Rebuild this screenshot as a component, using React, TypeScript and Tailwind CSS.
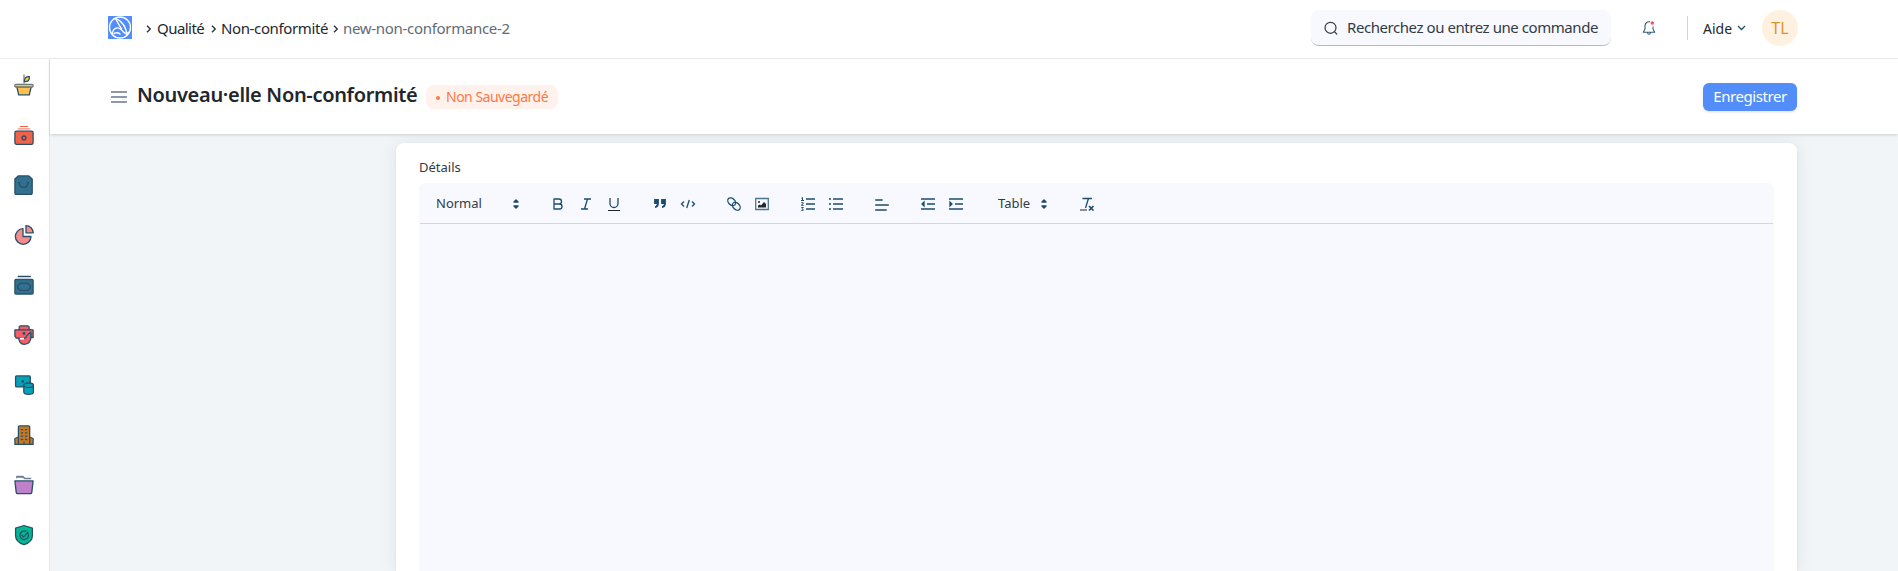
import React from 'react';

interface IconProps {
  children: React.ReactNode;
}

const SideIcon: React.FC<IconProps> = ({ children }) => (
  <a href="#" className="flex h-[50px] w-full items-center justify-center pr-px">
    <svg width="22" height="22" viewBox="0 0 22 22" fill="none" stroke="#285069" strokeWidth="1.3" strokeLinejoin="round" strokeLinecap="round">
      {children}
    </svg>
  </a>
);

const Sidebar = () => (
  <nav className="w-[50px] shrink-0 border-r border-[#e2e6ea] bg-white pt-px">
    <SideIcon>
      <path d="M11 9V1" stroke="#6b8799" />
      <path d="M11.500 7.600c-.5-3 1.200-5.400 4.900-5 .4 3.200-1.400 5.400-4.900 5z" fill="#ffc250" />
      <path d="M3.800 12.500h14.400l-1.900 8.300H5.700z" fill="#ffc250" />
      <rect x="1.900" y="10.400" width="18.200" height="2.600" rx="1" fill="#ffc250" stroke="#6b7a72" />
    </SideIcon>
    <SideIcon>
      <path d="M7.300 2.500h7.400" stroke="#f0634a" strokeWidth="1" />
      <path d="M5.500 4.900h11" stroke="#f7a99c" strokeWidth="1.600" />
      <rect x="1.900" y="7.200" width="18.200" height="13.100" rx="1.600" fill="#f0634a" />
      <circle cx="11" cy="13.900" r="1.900" />
    </SideIcon>
    <SideIcon>
      <path d="M5.200 1.900h10.600l3.400 3v14.200a1.200 1.200 0 0 1-1.200 1.200H3.100a1.200 1.200 0 0 1-1.200-1.200V4.900z" fill="#32708f" />
      <path d="M6.200 8.700c.2 6.200 8.400 6.200 8.700 0M5.700 8.700h1M14.400 8.700h1" />
    </SideIcon>
    <SideIcon>
      <path d="M10 4.700a7.800 7.800 0 1 0 8 7.800h-8z" fill="#f58c8c" />
      <path d="M13 1.700v7.100h7.200A7.200 7.200 0 0 0 13 1.700z" fill="#f58c8c" />
    </SideIcon>
    <SideIcon>
      <path d="M5.200 2.500h12.100" />
      <rect x="1.900" y="5.500" width="18.200" height="14.500" rx="1" fill="#32708f" />
      <path d="M7.500 9.200h7c1 0 1.200 1.700 2.800 2.200v2.800c-1.600.5-1.800 2.200-2.800 2.200h-7c-1 0-1.200-1.700-2.800-2.200v-2.800c1.600-.5 1.800-2.200 2.800-2.200z" />
    </SideIcon>
    <SideIcon>
      <path d="M5.500 13c.3 4.500 2 7.300 5.700 7.300 4.200 0 6.600-2.800 6.800-7.500V6H5.500z" fill="#f55d68" />
      <path d="M6.200 5.700V3.500a1.700 1.700 0 0 1 1.700-1.700h6.500a1.700 1.700 0 0 1 1.700 1.700v2.200" fill="#f55d68" />
      <path d="M1.900 5.800h18.200v7.700h-2.200V8.200l-3.200 2.300-2.300 3.700H3.300l-1.400-2z" fill="#f55d68" />
      <circle cx="11" cy="9.500" r=".8" />
      <path d="M7.700 14.700h2.500" stroke="#fff" strokeWidth="1.800" />
    </SideIcon>
    <SideIcon>
      <rect x="2.600" y="1.900" width="14.700" height="11" rx="1" fill="#00a4b8" />
      <circle cx="9.700" cy="7.400" r=".7" />
      <path d="M10.800 11.200v6.900c0 1.300 2.100 2.200 4.800 2.200s4.800-.9 4.800-2.200v-6.900" fill="#00a4b8" />
      <ellipse cx="15.600" cy="11.200" rx="4.800" ry="2.200" fill="#00a4b8" />
    </SideIcon>
    <SideIcon>
      <path d="M1.900 14.500l3.600-1.500h11l3.600 1.500v5.900H1.900z" fill="#c87a20" />
      <path d="M5.400 20.400V3.200a1.400 1.400 0 0 1 1.400-1.400h8.500a1.400 1.400 0 0 1 1.400 1.400v17.200z" fill="#c87a20" />
      <path d="M8.300 5.600h1.400M12.400 5.600h1.400M8.300 8.900h1.400M12.400 8.900h1.400M8.300 12.200h1.400M12.400 12.200h1.400M8.300 15.500h1.400M12.400 15.500h1.400M11 18.200v2" />
    </SideIcon>
    <SideIcon>
      <path d="M3.800 3.800V2.500h6.200l1.700 2h6" fill="#be81cc" stroke="#6b7f92" />
      <path d="M1.900 6.900h18.200l-1.300 11.500a1.500 1.500 0 0 1-1.500 1.300H4.700a1.500 1.500 0 0 1-1.500-1.300z" fill="#be81cc" />
    </SideIcon>
    <SideIcon>
      <path d="M11 1.500l8.400 2.700v7.300c0 4.600-3.600 7.700-8.400 9.200-4.800-1.500-8.400-4.600-8.400-9.200V4.200z" fill="#00b894" />
      <path d="M15 9.200a4.300 4.300 0 1 1-2.300-2M8.800 11.200l1.900 1.700 4.300-5" />
    </SideIcon>
  </nav>
);

const Chevron = () => (
  <svg width="6" height="10" viewBox="0 0 6 10" fill="none" stroke="#1f272e" strokeWidth="1.200" className="mt-0.5 shrink-0">
    <path d="M1 1.800L4.300 5 1 8.200" />
  </svg>
);

const Navbar = () => (
  <header className="flex h-[59px] items-center border-b border-[#ebeef5] bg-white pb-0.5 pl-[108px] pr-[100px]">
    <svg width="24" height="23" viewBox="0 0 24 23" fill="none" stroke="#fff" strokeWidth="1.300" className="-mt-0.5 shrink-0">
      <path d="M0 0h24v23H0z" fill="#528dfa" stroke="none" />
      <circle cx="12" cy="11.500" r="10.500" />
      <path d="M4.300 18.800c-.2-4 2-7 5.200-7 3 0 5 3 6 4.300 1.500 1.800 4 1.500 6.200-.3" />
      <path d="M7.500 2.500C13.500 4.500 18.500 11 18.800 19M7.500 2.500C9.500 6 10.500 8.500 14 13.500M5.500 18.200c1.500-2 5.500-2 7 .3" />
    </svg>
    <nav className="flex items-center whitespace-nowrap text-[15px] text-[#1f272e]">
      <span className="ml-[14px]"><Chevron /></span>
      <a href="#" className="ml-[5px] w-[54px] tracking-[-0.55px]">Qualité</a>
      <Chevron />
      <a href="#" className="ml-1 w-[109px] tracking-[-0.38px]">Non-conformité</a>
      <span className="ml-[3px]"><Chevron /></span>
      <span className="ml-1 tracking-[-0.31px] text-[#5f6c76]">new-non-conformance-2</span>
    </nav>
    <div className="ml-auto flex h-9 w-[300px] items-center rounded-lg border-b border-[#b4bac2] bg-[#f7f9ff] pl-[13px] text-[15px] text-[#313b44]">
      <svg width="14" height="14" viewBox="0 0 14 14" fill="none" stroke="#313b44" strokeWidth="1.200" strokeLinecap="round" className="mr-[9px] shrink-0">
        <circle cx="6.500" cy="6.800" r="5.500" />
        <path d="M10.400 10.700l2.300 2.300" />
      </svg>
      <span className="whitespace-nowrap tracking-[-0.44px]">Recherchez ou entrez une commande</span>
    </div>
    <svg width="14" height="16" viewBox="0 0 14 16" fill="none" stroke="#315d7c" strokeWidth="1.100" strokeLinejoin="round" className="ml-[31px]">
      <path d="M8 1.900C5 1.300 3 3.300 3 6v3L1.300 12.300h11.400L11 9V6.500M5.500 12.500c.2 2.300 2.800 2.300 3 0" />
      <circle cx="10.300" cy="3" r="1.700" fill="#ff4d4d" stroke="none" />
    </svg>
    <div className="ml-[31px] h-6 w-px bg-[#d1d6db]" />
    <button className="ml-[15px] flex w-[43px] items-center justify-between text-[14px] text-[#1f272e]">
      Aide
      <svg width="9" height="6" viewBox="0 0 9 6" fill="none" stroke="#1f4d6d" strokeWidth="1.300">
        <path d="M1 1l3.500 3.500L8 1" />
      </svg>
    </button>
    <div className="ml-4 flex size-9 items-center justify-center rounded-full bg-[#fff1df] text-[16px] text-[#d9932f]">TL</div>
  </header>
);

const PageHead = () => (
  <div className="relative z-10 flex h-[75px] items-center bg-white pl-[61px] pr-[101px] shadow-[0_1px_3px_rgba(0,0,0,0.15)]">
    <svg width="16" height="14" viewBox="0 0 16 14" stroke="#8d99a6" strokeWidth="2" className="shrink-0">
      <path d="M0 2h16M0 7h16M0 12h16" />
    </svg>
    <h1 className="-mt-[3px] ml-[10px] w-[281px] whitespace-nowrap text-[20px] font-semibold tracking-[-0.32px] text-[#1f272e]">
      Nouveau·elle Non-conformité
    </h1>
    <span className="ml-2 flex h-6 w-[132px] items-center whitespace-nowrap rounded-lg bg-[#fff1eb] pl-[10px] text-[14px] tracking-[-0.5px] text-[#ff7846]">
      <i className="mr-1.5 mt-0.5 size-1 rounded-full bg-[#ff7846]" />
      Non Sauvegardé
    </span>
    <button className="ml-auto h-7 w-[94px] rounded-md bg-[#528dfa] text-[15px] tracking-[-0.43px] text-white shadow-sm">Enregistrer</button>
  </div>
);

const Tool: React.FC<IconProps> = ({ children }) => (
  <button className="flex h-6 w-7 items-center justify-center">
    <svg width="18" height="18" viewBox="0 0 18 18" fill="none" stroke="#1c4c6e" strokeWidth="1.300">
      {children}
    </svg>
  </button>
);

const UpDown = () => (
  <svg width="18" height="18" viewBox="0 0 18 18" fill="#1c4c6e" stroke="#1c4c6e" strokeLinejoin="round">
    <path d="M7 11l2 2 2-2zM7 7l2-2 2 2z" strokeWidth="1.500" />
  </svg>
);

const Toolbar = () => (
  <div className="mx-px flex h-[41px] items-center border-b border-[#d1d8dd] pl-4 pt-px text-[13px] text-[#313b44]">
    <button className="flex w-[89px] items-center justify-between">Normal<UpDown /></button>
    <div className="ml-[19px] flex">
      <Tool>
        <path d="M5 4h5a2.500 2.500 0 0 1 0 5H5zM5 9h5.500a2.500 2.500 0 0 1 0 5H5z" strokeLinejoin="round" />
      </Tool>
      <Tool><path d="M7 4h7M4 14h7M10.500 4L7.500 14" /></Tool>
      <Tool>
        <path d="M5 3v5.500a4 4 0 0 0 8 0V3" />
        <path d="M3 15.500h12" stroke="#1f272e" strokeWidth="1" />
      </Tool>
    </div>
    <div className="ml-[18px] flex">
      <Tool>
        <path d="M4 5h3v3H4zM11 5h3v3h-3zM7 8c0 3-1 4-3 4M14 8c0 3-1 4-3 4" fill="#1c4c6e" strokeWidth="1.800" />
      </Tool>
      <Tool><path d="M5 6.500L2.500 9 5 11.500M13 6.500L15.500 9 13 11.500M10.300 5L7.700 13" /></Tool>
    </div>
    <div className="ml-[18px] flex">
      <Tool>
        <ellipse cx="6.700" cy="6.700" rx="4.500" ry="3.200" transform="rotate(45 6.700 6.700)" />
        <ellipse cx="11.300" cy="11.300" rx="4.500" ry="3.200" transform="rotate(45 11.300 11.300)" />
      </Tool>
      <Tool>
        <path d="M2.700 3.500h12.600v11H2.700z" stroke="#4f7691" />
        <path d="M5 12.500v-2l2-1 1 1 3-3.500 2 2v3.500z" fill="#1f272e" stroke="none" />
        <circle cx="6" cy="7" r="1" fill="#1f272e" stroke="none" />
      </Tool>
    </div>
    <div className="ml-[18px] flex">
      <Tool>
        <path d="M7 4h9M7 9h9M7 14h9" />
        <path d="M2.500 3.200l1-.7v3M2 5.500h3M2.300 7.700h1.900v.8L2.300 10.300h2.400M2.300 12.500h2l-.9 1 .9 1.800h-2" strokeWidth="1" />
      </Tool>
      <Tool><path d="M6 4h10M6 9h10M6 14h10M2 4h2M2 9h2M2 14h2" /></Tool>
    </div>
    <div className="ml-[18px] flex">
      <Tool><path d="M2.200 5h7.500M2.200 10h13.600M2.200 15h11.500" /></Tool>
    </div>
    <div className="ml-[18px] flex">
      <Tool>
        <path d="M2 4h14M8 9h8M2 14h14" />
        <path d="M5 7v4L3 9z" fill="#1c4c6e" />
      </Tool>
      <Tool>
        <path d="M2 4h14M8 9h8M2 14h14" />
        <path d="M3 7v4l2-2z" fill="#1c4c6e" />
      </Tool>
    </div>
    <button className="ml-7 flex w-[55px] items-center justify-between">Table<UpDown /></button>
    <div className="ml-5 flex">
      <Tool>
        <path d="M4.500 3.500H14M10.500 3.500L7.500 13" />
        <path d="M2 15h7" stroke="#1f272e" strokeWidth="1" />
        <path d="M11 11l4.500 4.500M15.500 11L11 15.500" strokeWidth="1.700" />
      </Tool>
    </div>
  </div>
);

const App = () => (
  <div className="flex h-screen flex-col overflow-hidden bg-[#f1f5f8] font-['Noto_Sans',sans-serif]">
    <Navbar />
    <div className="flex min-h-0 flex-1">
      <Sidebar />
      <main className="flex min-w-0 flex-1 flex-col">
        <PageHead />
        <section className="ml-[346px] mr-[101px] mt-[9px] flex min-h-0 flex-1 flex-col rounded-t-lg bg-white px-[23px] shadow-[0_0_18px_rgba(31,39,46,0.08),0_1px_3px_rgba(31,39,46,0.08)]">
          <label className="flex h-10 items-center pt-[10px] text-[13px] text-[#313b44]">Détails</label>
          <div className="min-h-0 flex-1 rounded-t-md bg-[#f7f9ff]">
            <Toolbar />
          </div>
        </section>
      </main>
    </div>
  </div>
);

export default App;
